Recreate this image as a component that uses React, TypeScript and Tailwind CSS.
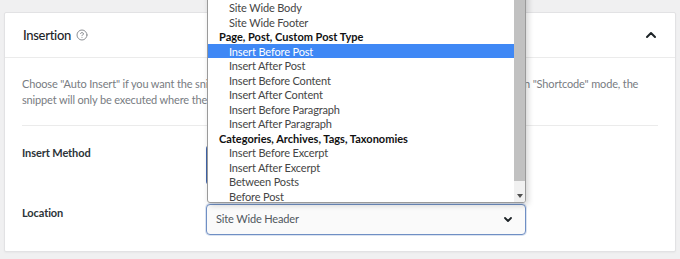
import React from "react";

const items: { t: string; g?: boolean; sel?: boolean }[] = [
  { t: "Site Wide Header" },
  { t: "Site Wide Body" },
  { t: "Site Wide Footer" },
  { t: "Page, Post, Custom Post Type", g: true },
  { t: "Insert Before Post", sel: true },
  { t: "Insert After Post" },
  { t: "Insert Before Content" },
  { t: "Insert After Content" },
  { t: "Insert Before Paragraph" },
  { t: "Insert After Paragraph" },
  { t: "Categories, Archives, Tags, Taxonomies", g: true },
  { t: "Insert Before Excerpt" },
  { t: "Insert After Excerpt" },
  { t: "Between Posts" },
  { t: "Before Post" },
];

export default function App() {
  return (
    <div
      className="relative w-[680px] h-[259px] overflow-hidden bg-[#f0f0f1] pt-[12px] px-[4px]"
      style={{ fontFamily: 'Lato, "Noto Sans", sans-serif' }}
    >
      <div className="bg-white border border-[#e2e2e4] rounded-[2px] shadow-[0_1px_2px_rgba(0,0,0,0.04)]">
        <div className="h-[45px] flex items-center justify-between pl-[18px] pr-[18px] border-b border-[#ebebeb]">
          <div className="flex items-center gap-[5px]">
            <span className="text-[13px] tracking-[-0.3px] text-[#1d2327] font-medium leading-none">Insertion</span>
            <svg width="12" height="12" viewBox="0 0 24 24" fill="none" stroke="#8c8f94" strokeWidth="2" strokeLinecap="round" strokeLinejoin="round">
              <circle cx="12" cy="12" r="10" />
              <path d="M9.09 9a3 3 0 0 1 5.83 1c0 2-3 3-3 3" />
              <path d="M12 17h.01" />
            </svg>
          </div>
          <svg width="12" height="8" viewBox="0 0 12 8" fill="none" stroke="#1d2327" strokeWidth="2" strokeLinecap="round" strokeLinejoin="round">
            <path d="M2 6l4-4 4 4" />
          </svg>
        </div>
        <div className="px-[17px] pt-[18px]">
          <p className="text-[11px] tracking-[-0.15px] leading-[16px] text-[#787c82] whitespace-nowrap">
            Choose "Auto Insert" if you want the snippet to be automatically executed in one of the locations available. In "Shortcode" mode, the
            <br />
            snippet will only be executed where the shortcode is inserted.
          </p>
          <div className="h-px bg-[#ebebeb] mt-[17px]" />
          <div className="flex pt-[19px]">
            <div className="w-[184px] text-[11px] tracking-[-0.1px] leading-[16px] font-bold text-[#2c3338]">Insert Method</div>
            <div className="h-[40px] w-[320px] border-l-2 border-[#3f63a8] rounded-l-[4px]" />
          </div>
          <div className="flex pt-[19px] pb-[16px]">
            <div className="w-[184px] pt-[1px] text-[11px] tracking-[-0.1px] leading-[16px] font-bold text-[#2c3338]">Location</div>
            <div className="h-[31px] w-[320px] border border-[#6f8fc4] rounded-[4px] bg-[#fafafa] flex items-center justify-between pl-[9px] pr-[12px] shadow-[0_0_0_1px_rgba(111,143,196,0.25)]">
              <span className="text-[11px] tracking-[-0.15px] text-[#50575e]">Site Wide Header</span>
              <svg width="10" height="7" viewBox="0 0 10 7" fill="none" stroke="#1d2327" strokeWidth="1.8" strokeLinecap="round" strokeLinejoin="round">
                <path d="M2 2l3 3 3-3" />
              </svg>
            </div>
          </div>
        </div>
      </div>

      <div className="absolute left-[207px] top-[-15.5px] w-[319px] h-[218px] bg-white border border-[#9a9a9a] rounded-b-[3px] overflow-hidden shadow-[2px_2px_6px_rgba(0,0,0,0.18)]">
        <div className="mr-[11px]">
          {items.map((it) => (
            <div
              key={it.t}
              className={
                "h-[14.5px] pt-[2px] flex items-center text-[11px] whitespace-nowrap " +
                (it.g
                  ? "pl-[11px] font-bold text-[#111]"
                  : it.sel
                  ? "pl-[21px] tracking-[-0.15px] bg-[#3f88f5] text-white"
                  : "pl-[21px] tracking-[-0.15px] text-[#454545]")
              }
            >
              {it.t}
            </div>
          ))}
        </div>
        <div className="absolute right-0 top-0 bottom-0 w-[11px] bg-[#f1f1f1] flex flex-col">
          <div className="h-[195px] bg-[#c1c1c1]" />
          <div className="flex-1 flex items-end justify-center pb-[4px]">
            <svg width="6" height="4" viewBox="0 0 6 4">
              <path d="M0 0h6L3 4z" fill="#505050" />
            </svg>
          </div>
        </div>
      </div>
    </div>
  );
}
